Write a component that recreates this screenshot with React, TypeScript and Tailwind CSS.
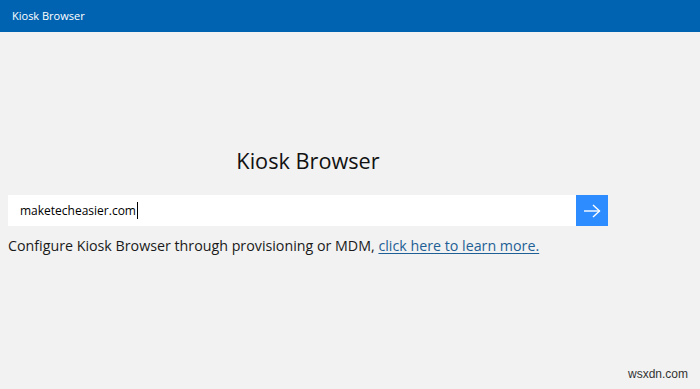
import React from 'react';

const font = { fontFamily: '"Open Sans", "Noto Sans", "Liberation Sans", sans-serif' };

const ArrowIcon: React.FC = () => (
  <svg width="18" height="14" viewBox="0 0 18 14" fill="none" stroke="white" strokeWidth="1.4">
    <path d="M1 7h15.5" />
    <path d="M10 1l6.5 6-6.5 6" />
  </svg>
);

export default function App() {
  return (
    <div className="w-[700px] h-[389px] bg-[#f2f2f2] flex flex-col" style={font}>
      <div className="h-8 bg-[#0063b1] flex items-center px-3 shrink-0">
        <span className="text-white text-[11px]">Kiosk Browser</span>
      </div>

      <div className="relative flex-1">
        <div className="ml-2 w-[600px] pt-[114px]">
          <h1 className="text-center text-[21.7px] leading-[30px] text-[#111]">Kiosk Browser</h1>

          <div className="mt-[19px] flex h-[31px]">
            <div className="flex-1 bg-white flex items-center pl-3">
              <span className="text-[12px] text-black">maketecheasier.com</span>
              <span className="w-px h-[17px] bg-black ml-px" />
            </div>
            <button className="w-8 bg-[#2d8cff] flex items-center justify-center">
              <ArrowIcon />
            </button>
          </div>

          <p className="mt-[9px] text-[14.25px] leading-[22px] text-[#1a1a1a] whitespace-nowrap">
            Configure Kiosk Browser through provisioning or MDM,{' '}
            <a href="#" className="text-[#1e5f96] underline underline-offset-2">click here to learn more.</a>
          </p>
        </div>

        <span className="absolute right-[12px] bottom-[6px] text-[12px] text-[#333]" style={{ fontFamily: '"Liberation Sans", sans-serif' }}>
          wsxdn.com
        </span>
      </div>
    </div>
  );
}
